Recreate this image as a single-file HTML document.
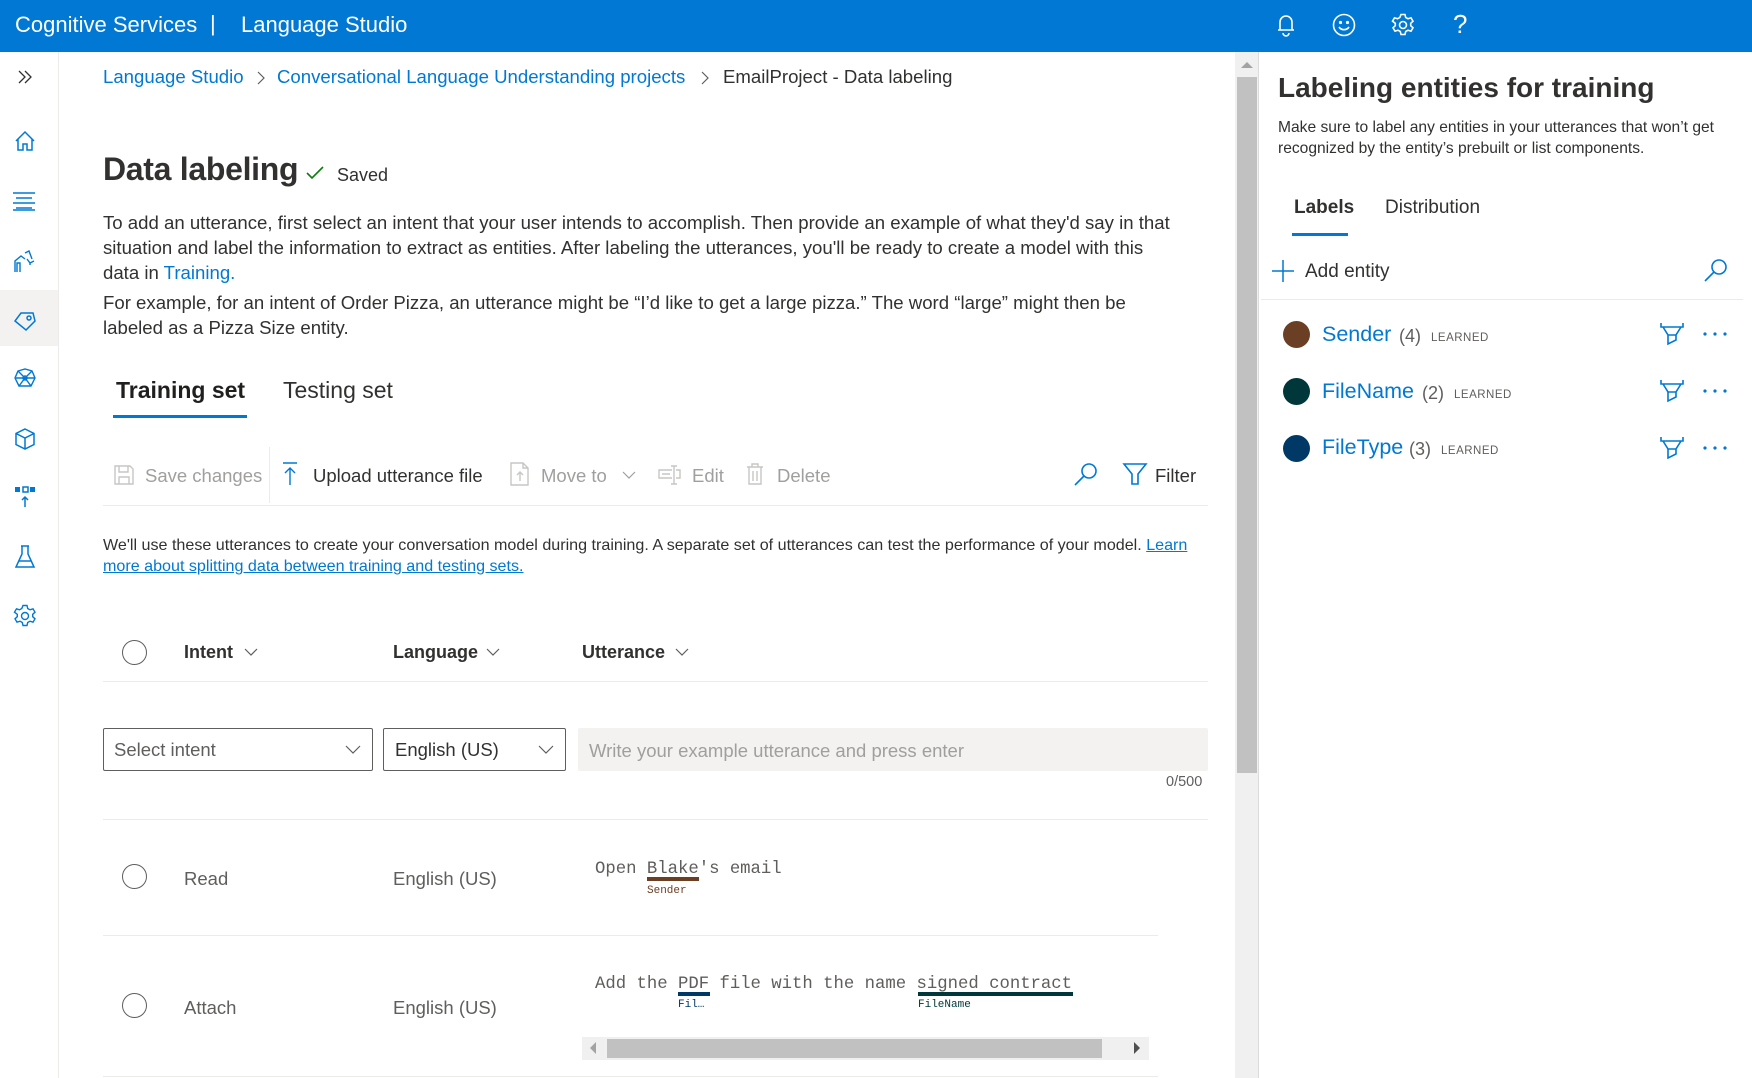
<!DOCTYPE html>
<html><head><meta charset="utf-8">
<style>
*{box-sizing:border-box;margin:0;padding:0}
body{width:1752px;height:1078px;overflow:hidden;background:#fff;font-family:"Liberation Sans",sans-serif;color:#323130;position:relative}
.a{position:absolute;white-space:nowrap}
.top{position:absolute;left:0;top:0;width:1752px;height:52px;background:#0078d4;color:#fff}
.nav{position:absolute;left:0;top:52px;width:59px;height:1026px;background:#fff;border-right:1px solid #edebe9}
.blue{color:#0078d4}
svg{position:absolute;overflow:visible}
.hl{position:absolute;height:1px;background:#edebe9}
.mono{font-family:"Liberation Mono",monospace;font-size:17.3px;color:#605e5c}
</style></head><body>
<div class="top">
 <div class="a" style="left:15px;top:12px;font-size:22px">Cognitive Services</div>
 <div class="a" style="left:210px;top:11px;font-size:22px">|</div>
 <div class="a" style="left:241px;top:12px;font-size:22px">Language Studio</div>
 <svg width="22" height="24" style="left:1275px;top:13px" fill="none" stroke="#fff" stroke-width="1.6"><path d="M5 17V9a6 6 0 0 1 12 0v8H3h16M8 20a3 3 0 0 0 6 0"/></svg>
 <svg width="24" height="24" style="left:1332px;top:13px" fill="none" stroke="#fff" stroke-width="1.6"><circle cx="12" cy="12" r="10.5"/><circle cx="8.5" cy="9.5" r=".8" fill="#fff"/><circle cx="15.5" cy="9.5" r=".8" fill="#fff"/><path d="M7 14a6 6 0 0 0 10 0"/></svg>
 <svg width="24" height="24" style="left:1391px;top:13px" fill="none" stroke="#fff" stroke-width="1.6"><circle cx="12" cy="12" r="3.5"/><path d="M10 1.5h4l.7 3 2.3 1.3 3-1 2 3.4-2.3 2.1v2.4l2.3 2.1-2 3.4-3-1-2.3 1.3-.7 3h-4l-.7-3-2.3-1.3-3 1-2-3.4 2.3-2.1v-2.4L1.5 8.2l2-3.4 3 1L8.8 4.5z"/></svg>
 <div class="a" style="left:1453px;top:9px;font-size:26px;font-weight:300">?</div>
</div>
<div class="nav">
 <div style="position:absolute;left:0;top:238px;width:58px;height:56px;background:#f3f2f1"></div>
</div>
<svg width="16" height="14" style="left:17px;top:70px" fill="none" stroke="#323130" stroke-width="1.3"><path d="M2 1l6 6-6 6M8 1l6 6-6 6"/></svg>
<svg width="22" height="22" style="left:14px;top:130px" fill="none" stroke="#0078d4" stroke-width="1.5"><path d="M2 11L11 2l9 9M4 9v11h5v-6h4v6h5V9"/></svg>
<svg width="22" height="18" style="left:13px;top:192px" fill="none" stroke="#0078d4" stroke-width="1.4"><path d="M0 1h22M3 6h16M0 11h22M3 16h16M0 18h22"/></svg>
<svg width="24" height="24" style="left:13px;top:249px" fill="none" stroke="#0078d4" stroke-width="1.4"><path d="M2 23V12l6-5 4 3M4 23V14h3v9M12 4l4-2 3 8M14 10l3 4 4-2M17 14v2"/></svg>
<svg width="24" height="22" style="left:13px;top:310px" fill="none" stroke="#0078d4" stroke-width="1.5"><path d="M8 3h12l2 8-9 9-11-9z"/><circle cx="16" cy="8" r="2"/></svg>
<svg width="24" height="24" style="left:13px;top:367px" fill="none" stroke="#0078d4" stroke-width="1.4"><path d="M5 4l7-2 7 2 3 7-4 8h-12l-4-8z M5 4l7 7 7-7 M3 11h19M12 11l-6 8M12 11l6 8"/><circle cx="12" cy="11" r="2"/></svg>
<svg width="22" height="22" style="left:14px;top:428px" fill="none" stroke="#0078d4" stroke-width="1.5"><path d="M11 1l9 4.5v11L11 21l-9-4.5v-11zM2 5.5l9 4.5 9-4.5M11 10v11"/></svg>
<svg width="22" height="22" style="left:14px;top:486px"><rect x="1" y="1" width="5" height="5" fill="#0078d4"/><rect x="9" y="1" width="5" height="5" fill="none" stroke="#0078d4" stroke-width="1.5"/><rect x="16" y="1" width="5" height="5" fill="#0078d4"/><path d="M11 21V11M8 14l3-3 3 3" stroke="#0078d4" stroke-width="1.5" fill="none"/></svg>
<svg width="22" height="24" style="left:14px;top:545px" fill="none" stroke="#0078d4" stroke-width="1.5"><path d="M7 1h8M8 1v8L2 22h18L14 9V1M5 16h12"/></svg>
<svg width="24" height="24" style="left:13px;top:604px" fill="none" stroke="#0078d4" stroke-width="1.4"><circle cx="12" cy="12" r="3.5"/><path d="M10 1.5h4l.7 3 2.3 1.3 3-1 2 3.4-2.3 2.1v2.4l2.3 2.1-2 3.4-3-1-2.3 1.3-.7 3h-4l-.7-3-2.3-1.3-3 1-2-3.4 2.3-2.1v-2.4L1.5 8.2l2-3.4 3 1L8.8 4.5z"/></svg>

<!-- breadcrumb -->
<div class="a blue" style="left:103px;top:66px;font-size:18.6px">Language Studio</div>
<svg width="10" height="14" style="left:256px;top:71px" fill="none" stroke="#605e5c" stroke-width="1.2"><path d="M2 1l6 6-6 6"/></svg>
<div class="a blue" style="left:277px;top:66px;font-size:18.6px">Conversational Language Understanding projects</div>
<svg width="10" height="14" style="left:700px;top:71px" fill="none" stroke="#605e5c" stroke-width="1.2"><path d="M2 1l6 6-6 6"/></svg>
<div class="a" style="left:723px;top:66px;font-size:18.6px">EmailProject - Data labeling</div>

<div class="a" style="left:103px;top:151px;font-size:32px;font-weight:600;letter-spacing:-0.3px">Data labeling</div>
<svg width="18" height="14" style="left:306px;top:166px" fill="none" stroke="#107c10" stroke-width="1.6"><path d="M1 7l5 5 11-11"/></svg>
<div class="a" style="left:337px;top:165px;font-size:18px">Saved</div>

<div class="a" style="left:103px;top:210px;font-size:18.6px;line-height:25px">To add an utterance, first select an intent that your user intends to accomplish. Then provide an example of what they'd say in that<br>situation and label the information to extract as entities. After labeling the utterances, you'll be ready to create a model with this<br>data in <span class="blue">Training.</span></div>
<div class="a" style="left:103px;top:290px;font-size:18.6px;line-height:25px">For example, for an intent of Order Pizza, an utterance might be “I’d like to get a large pizza.” The word “large” might then be<br>labeled as a Pizza Size entity.</div>

<div class="a" style="left:116px;top:377px;font-size:23px;font-weight:600;color:#201f1e">Training set</div>
<div style="position:absolute;left:113px;top:415px;width:134px;height:3px;background:#0078d4"></div>
<div class="a" style="left:283px;top:377px;font-size:23px;color:#323130">Testing set</div>

<!-- toolbar -->
<svg width="20" height="20" style="left:114px;top:465px" fill="none" stroke="#c8c6c4" stroke-width="1.4"><path d="M1 1h15l3 3v15H1zM5 1v6h9V1M5 19v-7h10v7"/></svg>
<div class="a" style="left:145px;top:465px;font-size:18.5px;color:#a19f9d">Save changes</div>
<div style="position:absolute;left:269px;top:447px;width:1px;height:56px;background:#edebe9"></div>
<svg width="16" height="24" style="left:282px;top:462px" fill="none" stroke="#0078d4" stroke-width="1.4"><path d="M1 1h14M8 23V6M3 11l5-5 5 5"/></svg>
<div class="a" style="left:313px;top:465px;font-size:18.5px;color:#323130">Upload utterance file</div>
<svg width="20" height="24" style="left:510px;top:462px" fill="none" stroke="#c8c6c4" stroke-width="1.4"><path d="M1 1h12l5 5v17H1zM13 1v5h5M10 19v-9M7 13l3-3 3 3"/></svg>
<div class="a" style="left:541px;top:465px;font-size:18.5px;color:#a19f9d">Move to</div>
<svg width="14" height="10" style="left:622px;top:470px" fill="none" stroke="#a19f9d" stroke-width="1.2"><path d="M1 2l6 6 6-6"/></svg>
<svg width="24" height="20" style="left:658px;top:465px" fill="none" stroke="#c8c6c4" stroke-width="1.4"><path d="M14 5H1v8h13M18 5h4v8h-4M16 1v18M13 1h6M13 19h6M4 9h8"/></svg>
<div class="a" style="left:692px;top:465px;font-size:18.5px;color:#a19f9d">Edit</div>
<svg width="18" height="22" style="left:746px;top:463px" fill="none" stroke="#c8c6c4" stroke-width="1.4"><path d="M1 4h16M6 4V1h6v3M3 4v17h12V4M7 8v10M11 8v10"/></svg>
<div class="a" style="left:777px;top:465px;font-size:18.5px;color:#a19f9d">Delete</div>
<svg width="24" height="24" style="left:1074px;top:462px" fill="none" stroke="#0078d4" stroke-width="1.6"><circle cx="15" cy="9" r="7"/><path d="M10 14L1 23"/></svg>
<svg width="24" height="22" style="left:1123px;top:463px" fill="none" stroke="#0078d4" stroke-width="1.6"><path d="M1 1h22l-8 10v10h-6V11z"/></svg>
<div class="a" style="left:1155px;top:465px;font-size:18.5px;color:#323130">Filter</div>
<div class="hl" style="left:103px;top:505px;width:1105px"></div>

<div class="a" style="left:103px;top:535px;font-size:16.1px;line-height:21px;color:#323130">We'll use these utterances to create your conversation model during training. A separate set of utterances can test the performance of your model. <span class="blue" style="text-decoration:underline">Learn</span><br><span class="blue" style="text-decoration:underline">more about splitting data between training and testing sets.</span></div>

<!-- header -->
<div style="position:absolute;left:122px;top:640px;width:25px;height:25px;border:1.5px solid #605e5c;border-radius:50%"></div>
<div class="a" style="left:184px;top:642px;font-size:18px;font-weight:600">Intent</div>
<svg width="14" height="10" style="left:244px;top:647px" fill="none" stroke="#605e5c" stroke-width="1.2"><path d="M1 2l6 6 6-6"/></svg>
<div class="a" style="left:393px;top:642px;font-size:18px;font-weight:600">Language</div>
<svg width="14" height="10" style="left:486px;top:647px" fill="none" stroke="#605e5c" stroke-width="1.2"><path d="M1 2l6 6 6-6"/></svg>
<div class="a" style="left:582px;top:642px;font-size:18px;font-weight:600">Utterance</div>
<svg width="14" height="10" style="left:675px;top:647px" fill="none" stroke="#605e5c" stroke-width="1.2"><path d="M1 2l6 6 6-6"/></svg>
<div class="hl" style="left:103px;top:681px;width:1105px"></div>

<!-- inputs -->
<div style="position:absolute;left:103px;top:728px;width:270px;height:43px;border:1px solid #605e5c;border-radius:2px"></div>
<div class="a" style="left:114px;top:739px;font-size:18.5px;color:#605e5c">Select intent</div>
<svg width="16" height="10" style="left:345px;top:744px" fill="none" stroke="#605e5c" stroke-width="1.2"><path d="M1 2l7 7 7-7"/></svg>
<div style="position:absolute;left:383px;top:728px;width:183px;height:43px;border:1px solid #605e5c;border-radius:2px"></div>
<div class="a" style="left:395px;top:739px;font-size:18.5px;color:#323130">English (US)</div>
<svg width="16" height="10" style="left:538px;top:744px" fill="none" stroke="#605e5c" stroke-width="1.2"><path d="M1 2l7 7 7-7"/></svg>
<div style="position:absolute;left:578px;top:728px;width:630px;height:43px;background:#f3f2f1;border-radius:2px"></div>
<div class="a" style="left:589px;top:740px;font-size:18.5px;color:#a19f9d">Write your example utterance and press enter</div>
<div class="a" style="left:1166px;top:774px;font-size:14.5px;color:#605e5c">0/500</div>
<div class="hl" style="left:103px;top:819px;width:1105px"></div>

<!-- row 1 -->
<div style="position:absolute;left:122px;top:864px;width:25px;height:25px;border:1.5px solid #605e5c;border-radius:50%"></div>
<div class="a" style="left:184px;top:868px;font-size:18.5px;color:#605e5c">Read</div>
<div class="a" style="left:393px;top:868px;font-size:18.5px;color:#605e5c">English (US)</div>
<div class="a mono" style="left:595px;top:860px">Open Blake's email</div>
<div style="position:absolute;left:647px;top:877px;width:52px;height:4px;background:#6b3f23"></div>
<div class="a" style="left:647px;top:885px;font-family:'Liberation Mono',monospace;font-size:11px;color:#6b3f23">Sender</div>
<div class="hl" style="left:103px;top:935px;width:1055px"></div>

<!-- row 2 -->
<div style="position:absolute;left:122px;top:993px;width:25px;height:25px;border:1.5px solid #605e5c;border-radius:50%"></div>
<div class="a" style="left:184px;top:997px;font-size:18.5px;color:#605e5c">Attach</div>
<div class="a" style="left:393px;top:997px;font-size:18.5px;color:#605e5c">English (US)</div>
<div class="a mono" style="left:595px;top:975px">Add the PDF file with the name signed contract</div>
<div style="position:absolute;left:678px;top:992px;width:32px;height:4px;background:#003966"></div>
<div class="a" style="left:678px;top:999px;font-family:'Liberation Mono',monospace;font-size:11px;color:#003966">Fil…</div>
<div style="position:absolute;left:918px;top:992px;width:155px;height:4px;background:#00373a"></div>
<div class="a" style="left:918px;top:999px;font-family:'Liberation Mono',monospace;font-size:11px;color:#00373a">FileName</div>
<div style="position:absolute;left:582px;top:1037px;width:567px;height:23px;background:#f0f0f0"></div>
<div style="position:absolute;left:607px;top:1039px;width:495px;height:19px;background:#c1c1c1"></div>
<svg width="8" height="12" style="left:589px;top:1042px"><path d="M7 0L1 6l6 6z" fill="#a3a3a3"/></svg>
<svg width="8" height="12" style="left:1133px;top:1042px"><path d="M1 0l6 6-6 6z" fill="#505050"/></svg>
<div class="hl" style="left:103px;top:1076px;width:1055px"></div>

<!-- main scrollbar -->
<div style="position:absolute;left:1235px;top:52px;width:24px;height:1026px;background:#f0f0f0;border-right:1px solid #dcdcdc"></div>
<svg width="12" height="8" style="left:1241px;top:61px"><path d="M0 7l6-6 6 6z" fill="#a3a3a3"/></svg>
<div style="position:absolute;left:1237px;top:77px;width:20px;height:696px;background:#c1c1c1"></div>

<!-- right panel -->
<div class="a" style="left:1278px;top:72px;font-size:28px;font-weight:600;color:#323130">Labeling entities for training</div>
<div class="a" style="left:1278px;top:117px;font-size:15.6px;line-height:21px;color:#323130">Make sure to label any entities in your utterances that won’t get<br>recognized by the entity’s prebuilt or list components.</div>
<div class="a" style="left:1294px;top:197px;font-size:19px;font-weight:600">Labels</div>
<div style="position:absolute;left:1292px;top:233px;width:56px;height:3px;background:#0078d4"></div>
<div class="a" style="left:1385px;top:197px;font-size:19px">Distribution</div>
<svg width="22" height="22" style="left:1272px;top:260px" fill="none" stroke="#0078d4" stroke-width="1.5"><path d="M11 0v22M0 11h22"/></svg>
<div class="a" style="left:1305px;top:261px;font-size:19px">Add entity</div>
<svg width="24" height="24" style="left:1704px;top:258px" fill="none" stroke="#0078d4" stroke-width="1.6"><circle cx="15" cy="9" r="7"/><path d="M10 14L1 23"/></svg>
<div class="hl" style="left:1261px;top:299px;width:482px"></div>

<div style="position:absolute;left:1283px;top:321px;width:27px;height:27px;border-radius:50%;background:#6b3f23"></div>
<div class="a blue" style="left:1322px;top:322px;font-size:21.5px">Sender</div>
<div class="a" style="left:1399px;top:326px;font-size:18px;color:#605e5c">(4)</div>
<div class="a" style="left:1431px;top:332px;font-size:11.5px;color:#605e5c;letter-spacing:.5px">LEARNED</div>
<div style="position:absolute;left:1283px;top:378px;width:27px;height:27px;border-radius:50%;background:#00373a"></div>
<div class="a blue" style="left:1322px;top:379px;font-size:21.5px">FileName</div>
<div class="a" style="left:1422px;top:383px;font-size:18px;color:#605e5c">(2)</div>
<div class="a" style="left:1454px;top:389px;font-size:11.5px;color:#605e5c;letter-spacing:.5px">LEARNED</div>
<div style="position:absolute;left:1283px;top:435px;width:27px;height:27px;border-radius:50%;background:#003966"></div>
<div class="a blue" style="left:1322px;top:435px;font-size:21.5px">FileType</div>
<div class="a" style="left:1409px;top:439px;font-size:18px;color:#605e5c">(3)</div>
<div class="a" style="left:1441px;top:445px;font-size:11.5px;color:#605e5c;letter-spacing:.5px">LEARNED</div>

<svg width="24" height="24" style="left:1660px;top:322px" fill="none" stroke="#0078d4" stroke-width="1.6"><path d="M1 1v4h22V1M3 5l5 8v9l8-4v-5l5-8M8 13h8"/></svg>
<svg width="24" height="24" style="left:1660px;top:379px" fill="none" stroke="#0078d4" stroke-width="1.6"><path d="M1 1v4h22V1M3 5l5 8v9l8-4v-5l5-8M8 13h8"/></svg>
<svg width="24" height="24" style="left:1660px;top:436px" fill="none" stroke="#0078d4" stroke-width="1.6"><path d="M1 1v4h22V1M3 5l5 8v9l8-4v-5l5-8M8 13h8"/></svg>
<svg width="24" height="4" style="left:1703px;top:332px"><circle cx="2" cy="2" r="1.6" fill="#0078d4"/><circle cx="12" cy="2" r="1.6" fill="#0078d4"/><circle cx="22" cy="2" r="1.6" fill="#0078d4"/></svg>
<svg width="24" height="4" style="left:1703px;top:389px"><circle cx="2" cy="2" r="1.6" fill="#0078d4"/><circle cx="12" cy="2" r="1.6" fill="#0078d4"/><circle cx="22" cy="2" r="1.6" fill="#0078d4"/></svg>
<svg width="24" height="4" style="left:1703px;top:446px"><circle cx="2" cy="2" r="1.6" fill="#0078d4"/><circle cx="12" cy="2" r="1.6" fill="#0078d4"/><circle cx="22" cy="2" r="1.6" fill="#0078d4"/></svg>
</body></html>
